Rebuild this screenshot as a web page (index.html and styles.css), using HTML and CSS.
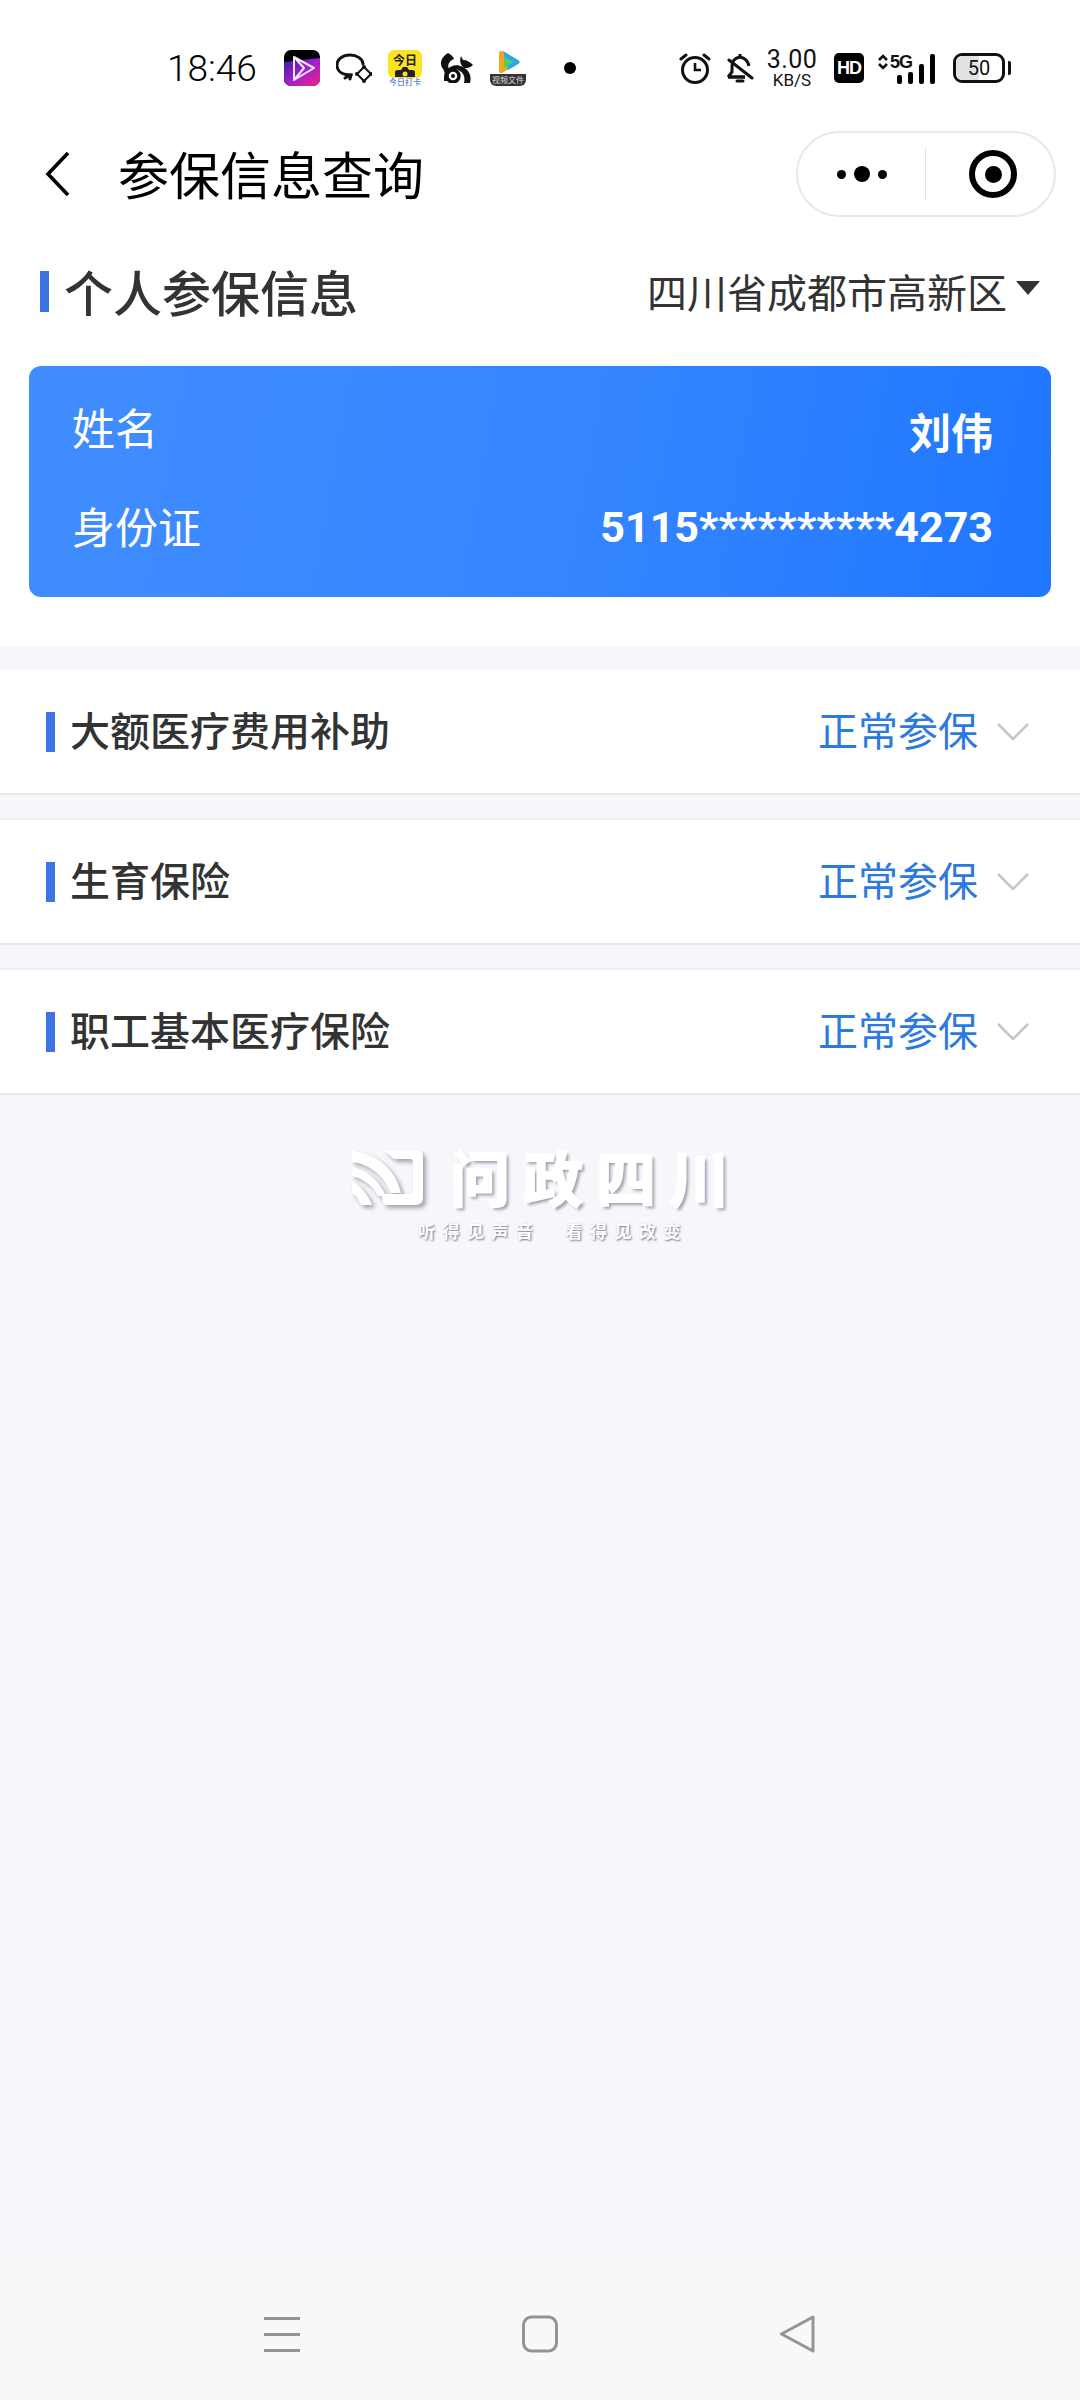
FILE: index.html
```html
<!DOCTYPE html>
<html lang="zh-CN">
<head>
    <meta charset="UTF-8">
    <meta name="viewport" content="width=device-width, initial-scale=1.0">
    <title>参保信息查询</title>
    <link rel="stylesheet" href="styles.css">
</head>
<body>

    <div class="statusbar">
        <div class="status-left">
            <span class="time">18:46</span>
            <!-- video app -->
            <svg class="app-icon" width="36" height="36" viewBox="0 0 36 36">
                <defs>
                    <linearGradient id="vid" x1="0" y1="0" x2="1" y2="1">
                        <stop offset="0" stop-color="#3a1a9a"/>
                        <stop offset="0.5" stop-color="#a020d0"/>
                        <stop offset="1" stop-color="#f02080"/>
                    </linearGradient>
                </defs>
                <rect width="36" height="36" rx="7" fill="#000"/>
                <path d="M0 12 L36 8 V29 a7 7 0 0 1 -7 7 H7 a7 7 0 0 1 -7 -7 Z" fill="url(#vid)"/>
                <path d="M10 7 L30 18 L10 30 Z M10 7 L20 18 L10 30" fill="none" stroke="#f2e8ff" stroke-width="2" stroke-linejoin="round"/>
            </svg>
            <!-- chat bubbles -->
            <svg class="app-icon" width="36" height="36" viewBox="0 0 36 36">
                <path d="M14 29 L15 25 C6 25 1 21 1 15 C1 9 7 5 14 5 C21 5 27 9 27 14" fill="none" stroke="#111" stroke-width="3" stroke-linecap="round"/>
                <path d="M9 28 L15 25" fill="none" stroke="#111" stroke-width="3" stroke-linecap="round"/>
                <path d="M28 17 L35 24 L28 31 L21 24 Z" fill="none" stroke="#111" stroke-width="2"/>
                <circle cx="28" cy="17" r="2" fill="#111"/><circle cx="35" cy="24" r="2" fill="#111"/>
                <circle cx="28" cy="31" r="2" fill="#111"/><circle cx="21" cy="24" r="2" fill="#111"/>
            </svg>
            <!-- camera app -->
            <div class="app-today">
                <div class="today-top">
                    <span class="today-title">今日</span>
                    <svg width="20" height="10" viewBox="0 0 20 10"><path d="M0 10 V5 Q0 3 3 3 H6 L8 0 H12 L14 3 H17 Q20 3 20 5 V10 Z" fill="#222"/><circle cx="10" cy="7" r="2.5" fill="#fbe320"/></svg>
                </div>
                <span class="today-sub">今日打卡</span>
            </div>
            <!-- squirrel -->
            <svg class="app-icon app-squirrel" width="33" height="30" viewBox="1 2 33 30">
                <path d="M9 2 C2 6 0 13 4 18 C6 21 6 23 5 26 C9 24 11 21 10 18 C8 14 10 10 15 8 C14 5 11 3 9 2 Z" fill="#111"/>
                <path d="M22 5 L24 9 C28 9 31 11 34 14 C31 17 28 17 25 17 C22 14 20 11 22 5 Z" fill="#111"/>
                <circle cx="14" cy="25" r="6" fill="none" stroke="#111" stroke-width="3.5"/>
                <path d="M5 30 C4 18 14 11 24 16 C30 19 33 25 31 32 L25 32 C27 25 23 19 16 18 C11 18 8 23 9 30 Z" fill="#111"/>
                <circle cx="14" cy="25" r="2" fill="#111"/>
            </svg>
            <!-- video tent -->
            <div class="app-tv">
                <svg width="28" height="24" viewBox="0 0 28 24">
                    <path d="M5 3 Q5 0 8 1 L24 10 Q27 12 24 14 L8 23 Q5 24 5 21 Z" fill="#f4a620"/>
                    <path d="M9 1 L24 10 Q27 12 24 14 L14 20 Z" fill="#2aa6ef"/>
                    <path d="M10 7 L20 12 L10 18 Z" fill="#4bcf62"/>
                </svg>
                <span class="tv-tag">视频文件</span>
            </div>
            <span class="status-dot"></span>
        </div>
        <div class="status-right">
            <!-- alarm -->
            <svg width="32" height="32" viewBox="0 0 32 32" fill="none" stroke="#111" stroke-width="3">
                <circle cx="16" cy="18" r="12.5"/>
                <path d="M16 11 V18 H22" stroke-width="2.6"/>
                <path d="M2 7 L7 3 M30 7 L25 3" stroke-linecap="round"/>
            </svg>
            <!-- muted bell -->
            <svg class="icon-bell" width="28" height="32" viewBox="0 0 28 32" fill="none" stroke="#111" stroke-width="3">
                <path d="M2 25 L6 20 V14 C6 9 9 6 14 5 C19 6 22 9 23 14"/>
                <path d="M2 25 H19" stroke-width="3.5"/>
                <path d="M14 2 V5"/>
                <path d="M3 8 L26 26" stroke-linecap="round"/>
                <path d="M11 29 H17" stroke-linecap="round"/>
            </svg>
            <div class="speed">
                <span class="speed-num">3.00</span>
                <span class="speed-unit">KB/S</span>
            </div>
            <div class="hd">HD</div>
            <div class="net">
                <svg class="net-arrows" width="12" height="18" viewBox="0 0 12 18" fill="none" stroke="#111" stroke-width="2.6">
                    <path d="M2 7 L6 3 L10 7 M2 11 L6 15 L10 11"/>
                </svg>
                <span class="net-5g">5G</span>
                <div class="net-bars">
                    <i class="bar-1"></i><i class="bar-2"></i><i class="bar-3"></i><i class="bar-4"></i>
                </div>
            </div>
            <div class="battery">
                <div class="battery-body">
                    <span class="battery-fill"></span>
                    <span class="battery-num">50</span>
                </div>
                <span class="battery-cap"></span>
            </div>
        </div>
    </div>

    <header class="topbar">
        <div class="topbar-left">
            <svg class="back" width="26" height="46" viewBox="0 0 26 46" fill="none" stroke="#000" stroke-width="3.6">
                <path d="M23 2 L3 23 L23 44"/>
            </svg>
            <h1 class="page-title">参保信息查询</h1>
        </div>
        <div class="capsule">
            <div class="capsule-more">
                <i class="dot-s"></i><i class="dot-b"></i><i class="dot-s"></i>
            </div>
            <span class="capsule-line"></span>
            <div class="capsule-close">
                <span class="target"></span>
            </div>
        </div>
    </header>

    <main class="content">
        <section class="person">
            <div class="person-head">
                <div class="head-title">
                    <span class="mark"></span>
                    <h2>个人参保信息</h2>
                </div>
                <div class="region">
                    <span>四川省成都市高新区</span>
                    <span class="caret"></span>
                </div>
            </div>
            <div class="card">
                <div class="card-row card-row-name">
                    <span class="card-label">姓名</span>
                    <span class="card-value name-value">刘伟</span>
                </div>
                <div class="card-row">
                    <span class="card-label">身份证</span>
                    <span class="card-value id-value">5115**********4273</span>
                </div>
            </div>
        </section>

        <section class="ins-list">
            <div class="ins-row">
                <div class="ins-name"><span class="ins-mark"></span>大额医疗费用补助</div>
                <div class="ins-status">正常参保
                    <svg width="32" height="18" viewBox="0 0 32 18" fill="none" stroke="#c4c6cc" stroke-width="2.6"><path d="M1 1 L16 16 L31 1"/></svg>
                </div>
            </div>
            <div class="ins-row">
                <div class="ins-name"><span class="ins-mark"></span>生育保险</div>
                <div class="ins-status">正常参保
                    <svg width="32" height="18" viewBox="0 0 32 18" fill="none" stroke="#c4c6cc" stroke-width="2.6"><path d="M1 1 L16 16 L31 1"/></svg>
                </div>
            </div>
            <div class="ins-row">
                <div class="ins-name"><span class="ins-mark"></span>职工基本医疗保险</div>
                <div class="ins-status">正常参保
                    <svg width="32" height="18" viewBox="0 0 32 18" fill="none" stroke="#c4c6cc" stroke-width="2.6"><path d="M1 1 L16 16 L31 1"/></svg>
                </div>
            </div>
        </section>

        <div class="watermark">
            <div class="wm-main">
                <svg class="wm-logo" width="72" height="56" viewBox="0 0 72 56">
                    <path d="M31 0 H64 Q71 0 71 7 V48 Q71 55 64 55 H32 L29 44 H58 Q61 44 61 41 V12 Q61 9 58 9 H42 Q37 4 31 0 Z" fill="#fff"/>
                    <path d="M0 1 C25 3 44 20 49 43 L39 43 C33 27 18 14 0 12 Z" fill="#fff"/>
                    <path d="M0 17 C14 19 28 31 34 46 L26 46 C20 35 10 28 0 26 Z" fill="#fff"/>
                    <path d="M0 32 C8 35 16 44 20 55 L9 55 C6 48 3 45 0 43 Z" fill="#fff"/>
                </svg>
                <span class="wm-title">问政四川</span>
            </div>
            <div class="wm-sub"><span>听得见声音</span><span>看得见改变</span></div>
        </div>
    </main>

    <footer class="navbar">
        <svg width="38" height="38" viewBox="0 0 38 38" fill="#949494">
            <rect x="1" y="2" width="36" height="3"/><rect x="1" y="18" width="36" height="3"/><rect x="1" y="34" width="36" height="3"/>
        </svg>
        <svg width="38" height="38" viewBox="0 0 38 38" fill="none" stroke="#949494" stroke-width="3">
            <rect x="2.5" y="2" width="33" height="34" rx="8"/>
        </svg>
        <svg width="38" height="38" viewBox="0 0 38 38" fill="none" stroke="#949494" stroke-width="3" stroke-linejoin="round">
            <path d="M2.5 19 L34 2 V36 Z"/>
        </svg>
    </footer>

</body>
</html>
```

FILE: styles.css
```css
* {
    box-sizing: border-box;
}
html, body {
    margin: 0;
    padding: 0;
}
body {
    width: 1080px;
    height: 2400px;
    display: flex;
    flex-direction: column;
    overflow: hidden;
    background-color: #f6f7fb;
    font-family: "Noto Sans CJK SC", "Noto Sans", sans-serif;
    color: #333;
}

/* status bar */
.statusbar {
    height: 111px;
    flex-shrink: 0;
    background-color: #fff;
    padding: 46px 69px 0 167px;
    display: flex;
    justify-content: space-between;
    align-items: flex-start;
}
.status-left, .status-right {
    display: flex;
    align-items: center;
    height: 44px;
}
.time {
    font-family: Roboto, sans-serif;
    font-size: 37px;
    font-weight: 300;
    color: #000;
    width: 117px;
}
.app-icon {
    display: block;
    margin-right: 16px;
}
.app-today {
    width: 34px;
    height: 36px;
    margin-right: 18px;
    display: flex;
    flex-direction: column;
    align-items: center;
}
.today-top {
    width: 34px;
    height: 28px;
    padding-top: 2px;
    border-radius: 6px;
    background-color: #fbe320;
    display: flex;
    flex-direction: column;
    align-items: center;
}
.today-title {
    font-size: 12px;
    line-height: 15px;
    font-weight: 700;
    color: #222;
}
.today-top svg {
    display: block;
    flex-shrink: 0;
}
.today-sub {
    font-size: 8px;
    line-height: 8px;
    white-space: nowrap;
    color: #1a5ad0;
}
.app-squirrel {
    margin-right: 17px;
}
.app-tv {
    width: 36px;
    height: 36px;
    margin-right: 38px;
    display: flex;
    flex-direction: column;
    align-items: center;
}
.app-tv svg {
    display: block;
    flex-shrink: 0;
}
.tv-tag {
    width: 36px;
    height: 12px;
    background-color: #333;
    border-radius: 0 0 6px 6px;
    font-size: 8px;
    line-height: 12px;
    text-align: center;
    color: #ddd;
    white-space: nowrap;
}
.status-dot {
    width: 12px;
    height: 12px;
    border-radius: 50%;
    background-color: #000;
}
.status-right svg {
    display: block;
}
.icon-bell {
    margin-left: 15px;
}
.speed {
    margin-left: 12px;
    width: 52px;
    display: flex;
    flex-direction: column;
    align-items: center;
    font-family: Roboto, sans-serif;
    color: #111;
}
.speed-num {
    font-size: 25px;
    line-height: 24px;
    letter-spacing: 0.5px;
}
.speed-unit {
    font-size: 17px;
    line-height: 16px;
}
.hd {
    margin-left: 16px;
    width: 30px;
    height: 30px;
    border-radius: 5px;
    background-color: #000;
    color: #fff;
    font-family: "Liberation Sans", sans-serif;
    font-weight: 700;
    font-size: 18px;
    line-height: 30px;
    text-align: center;
    letter-spacing: -1px;
}
.net {
    position: relative;
    margin-left: 15px;
    width: 58px;
    height: 32px;
}
.net-arrows {
    position: absolute;
    left: -2px;
    top: 1px;
}
.net-5g {
    position: absolute;
    left: 11px;
    top: 0;
    font-family: "Liberation Sans", sans-serif;
    font-size: 18px;
    line-height: 20px;
    font-weight: 700;
    letter-spacing: -1px;
    color: #111;
}
.net-bars {
    position: absolute;
    left: 18px;
    bottom: 0;
    display: flex;
    align-items: flex-end;
    gap: 6px;
}
.net-bars i {
    display: block;
    width: 5px;
    border-radius: 2px;
    background-color: #000;
}
.bar-1 { height: 9px; }
.bar-2 { height: 12px; }
.bar-3 { height: 20px; }
.bar-4 { height: 30px; }
.battery {
    margin-left: 16px;
    display: flex;
    align-items: center;
}
.battery-body {
    position: relative;
    width: 52px;
    height: 30px;
    border: 3px solid #111;
    border-radius: 9px;
    overflow: hidden;
    text-align: center;
}
.battery-fill {
    position: absolute;
    left: 0;
    top: 0;
    bottom: 0;
    width: 50%;
    background-color: #e2e2e2;
}
.battery-num {
    position: relative;
    font-family: Roboto, sans-serif;
    font-size: 20px;
    line-height: 24px;
    color: #111;
    display: block;
}
.battery-cap {
    width: 3px;
    height: 14px;
    margin-left: 3px;
    border-radius: 0 2px 2px 0;
    background-color: #111;
}

/* mini program top bar */
.topbar {
    height: 128px;
    flex-shrink: 0;
    background-color: #fff;
    padding: 0 24px 2px 45px;
    display: flex;
    justify-content: space-between;
    align-items: center;
}
.topbar-left {
    display: flex;
    align-items: center;
}
.back {
    display: block;
}
.page-title {
    margin: 0 0 0 47px;
    padding-bottom: 2px;
    font-size: 51px;
    line-height: 60px;
    font-weight: 400;
    color: #000;
}
.capsule {
    width: 260px;
    height: 86px;
    border: 2px solid #e8e8e8;
    border-radius: 43px;
    display: flex;
    align-items: center;
}
.capsule-more {
    width: 127px;
    display: flex;
    justify-content: center;
    align-items: center;
    gap: 8px;
}
.capsule-more i {
    display: block;
    border-radius: 50%;
    background-color: #000;
}
.dot-s {
    width: 9px;
    height: 9px;
}
.dot-b {
    width: 16px;
    height: 16px;
}
.capsule-line {
    width: 1px;
    height: 52px;
    background-color: #e4e4e4;
}
.capsule-close {
    flex: 1;
    padding-left: 6px;
    display: flex;
    justify-content: center;
    align-items: center;
}
.target {
    width: 48px;
    height: 48px;
    border: 6px solid #000;
    border-radius: 50%;
    display: flex;
    justify-content: center;
    align-items: center;
}
.target::after {
    content: "";
    width: 17px;
    height: 17px;
    border-radius: 50%;
    background-color: #000;
}

/* content */
.content {
    flex: 1;
    display: flex;
    flex-direction: column;
}
.person {
    height: 407px;
    flex-shrink: 0;
    background-color: #fff;
    padding: 0 29px;
}
.person-head {
    height: 104px;
    margin-bottom: 23px;
    padding: 0 11px;
    display: flex;
    justify-content: space-between;
    align-items: center;
}
.head-title {
    display: flex;
    align-items: center;
}
.mark {
    width: 9px;
    height: 41px;
    background-color: #3d74e4;
}
.head-title h2 {
    margin: 0 0 0 15px;
    font-size: 49px;
    line-height: 60px;
    font-weight: 500;
    color: #333;
}
.region {
    display: flex;
    align-items: center;
    font-size: 40px;
    line-height: 50px;
    color: #333;
}
.caret {
    width: 0;
    height: 0;
    margin-left: 9px;
    margin-top: -6px;
    border-left: 12px solid transparent;
    border-right: 12px solid transparent;
    border-top: 14px solid #333;
}
.card {
    height: 231px;
    padding: 0 58px 0 43px;
    border-radius: 12px;
    background: linear-gradient(100deg, #418dff 0%, #3786ff 50%, #1f77ff 100%);
    color: #fff;
    display: flex;
    flex-direction: column;
}
.card-row {
    height: 58px;
    display: flex;
    justify-content: space-between;
    align-items: center;
}
.card-row-name {
    height: 130px;
}
.card-label {
    font-size: 43px;
    line-height: 54px;
}
.card-row-name .card-label {
    margin-bottom: 10px;
}
.card-value {
    font-family: Roboto, "Noto Sans CJK SC", sans-serif;
    font-size: 43px;
    line-height: 54px;
    font-weight: 700;
}
.name-value {
    font-family: "Noto Sans CJK SC", sans-serif;
    font-size: 42px;
}
.id-value {
    margin-top: 4px;
}

.ins-list {
    padding-top: 24px;
    display: flex;
    flex-direction: column;
    gap: 23px;
}
.ins-row {
    height: 125px;
    padding: 0 51px 5px 46px;
    background-color: #fff;
    border-bottom: 2px solid #e6e8ee;
    display: flex;
    justify-content: space-between;
    align-items: center;
}
.ins-row + .ins-row {
    height: 127px;
    border-top: 2px solid #eceef2;
}
.ins-name {
    display: flex;
    align-items: center;
    font-size: 40px;
    line-height: 50px;
    font-weight: 500;
    color: #333;
}
.ins-mark {
    width: 9px;
    height: 40px;
    margin-top: 5px;
    margin-right: 15px;
    background-color: #3d74e4;
}
.ins-status {
    display: flex;
    align-items: center;
    gap: 19px;
    font-size: 40px;
    line-height: 50px;
    color: #2c7ae0;
}
.ins-status svg {
    margin-top: 5px;
}

/* watermark */
.watermark {
    margin: 39px 0 0 352px;
    align-self: flex-start;
}
.wm-main {
    display: flex;
    align-items: center;
}
.wm-logo {
    display: block;
    flex-shrink: 0;
    margin-top: 4px;
    filter: drop-shadow(3px 3px 2px rgba(60, 60, 80, 0.45));
}
.wm-title {
    margin-left: 26px;
    font-size: 60px;
    line-height: 84px;
    letter-spacing: 13px;
    font-weight: 700;
    white-space: nowrap;
    color: #fff;
    -webkit-text-stroke: 2px #fff;
    text-shadow: 3px 3px 3px rgba(60, 60, 80, 0.45);
}
.wm-sub {
    display: flex;
    gap: 25px;
    margin-top: 1px;
    padding-left: 66px;
    font-size: 17px;
    line-height: 24px;
    letter-spacing: 7.5px;
    font-weight: 700;
    color: #fff;
    text-shadow: 1px 1px 2px rgba(60, 60, 80, 0.7);
}

/* system nav */
.navbar {
    height: 137px;
    flex-shrink: 0;
    background-color: #f8f8f8;
    padding: 5px 263px 0;
    display: flex;
    justify-content: space-between;
    align-items: center;
}
.navbar svg {
    display: block;
}
```
